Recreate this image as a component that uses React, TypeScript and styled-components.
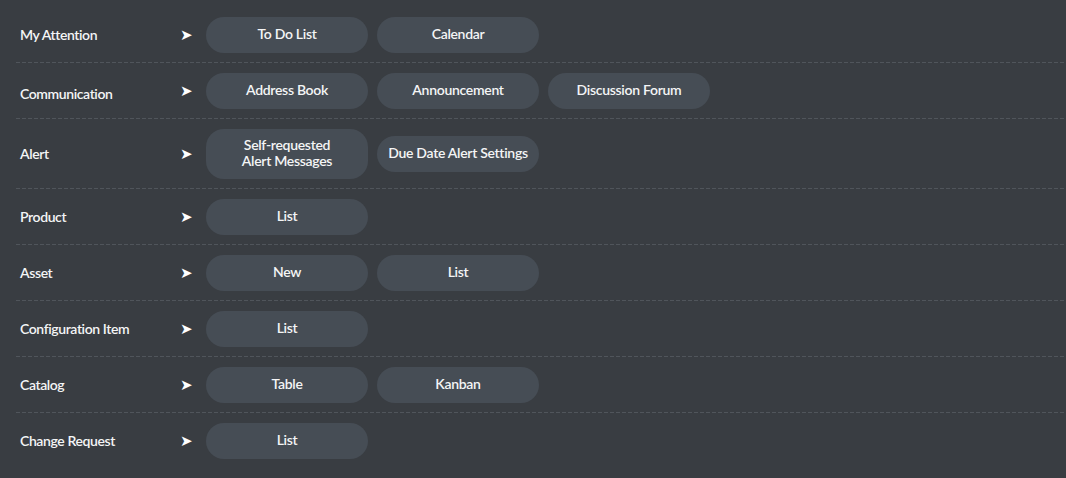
import React from "react";
import styled, { createGlobalStyle } from "styled-components";

const Global = createGlobalStyle`
  html, body {
    margin: 0;
    padding: 0;
    background: #393d42;
  }
  body {
    font-family: Lato, "Noto Sans", sans-serif;
    color: #f4f5f6;
  }
`;

const Page = styled.div`
  padding: 7px 0 0 16px;
  min-height: 478px;
  box-sizing: border-box;
  background: #393d42;
`;

const Row = styled.div<{ $last?: boolean }>`
  display: grid;
  grid-template-columns: 160px 26px 1fr;
  align-items: center;
  padding: 10px 0 10px 4px;
  background-image: ${(p) =>
    p.$last
      ? "none"
      : "linear-gradient(to right, #50555b 0 4px, transparent 4px 6px)"};
  background-size: 6px 1px;
  background-repeat: repeat-x;
  background-position: left bottom;
`;

const Label = styled.div<{ $nudge?: number }>`
  font-size: 14px;
  font-weight: 600;
  letter-spacing: -0.4px;
  margin-top: ${(p) => (p.$nudge ?? 0) - 1}px;
`;

const Arrow = styled.div`
  font-size: 15px;
  font-family: "DejaVu Sans", sans-serif;
  color: #ffffff;
  line-height: 1;
  padding-top: 1px;
`;

const Buttons = styled.div`
  display: flex;
  gap: 9px;
  align-items: center;
`;

const Btn = styled.button`
  width: 162px;
  min-height: 36px;
  padding: 8px 10px 10px;
  border: none;
  border-radius: 18px;
  background: #464d55;
  color: #f4f5f6;
  font-family: Lato, "Noto Sans", sans-serif;
  font-size: 14px;
  font-weight: 600;
  letter-spacing: -0.3px;
  line-height: 16px;
  text-align: center;
  cursor: pointer;
`;

const rows: { label: string; nudge?: number; items: string[][] }[] = [
  { label: "My Attention", items: [["To Do List"], ["Calendar"]] },
  {
    label: "Communication",
    nudge: 6,
    items: [["Address Book"], ["Announcement"], ["Discussion Forum"]],
  },
  {
    label: "Alert",
    items: [["Self-requested", "Alert Messages"], ["Due Date Alert Settings"]],
  },
  { label: "Product", items: [["List"]] },
  { label: "Asset", items: [["New"], ["List"]] },
  { label: "Configuration Item", items: [["List"]] },
  { label: "Catalog", items: [["Table"], ["Kanban"]] },
  { label: "Change Request", items: [["List"]] },
];

export default function App() {
  return (
    <Page>
      <Global />
      {rows.map((r, i) => (
        <Row key={r.label} $last={i === rows.length - 1}>
          <Label $nudge={r.nudge}>{r.label}</Label>
          <Arrow>➤</Arrow>
          <Buttons>
            {r.items.map((lines, j) => (
              <Btn key={j}>
                {lines.map((l, k) => (
                  <React.Fragment key={k}>
                    {k > 0 && <br />}
                    {l}
                  </React.Fragment>
                ))}
              </Btn>
            ))}
          </Buttons>
        </Row>
      ))}
    </Page>
  );
}
